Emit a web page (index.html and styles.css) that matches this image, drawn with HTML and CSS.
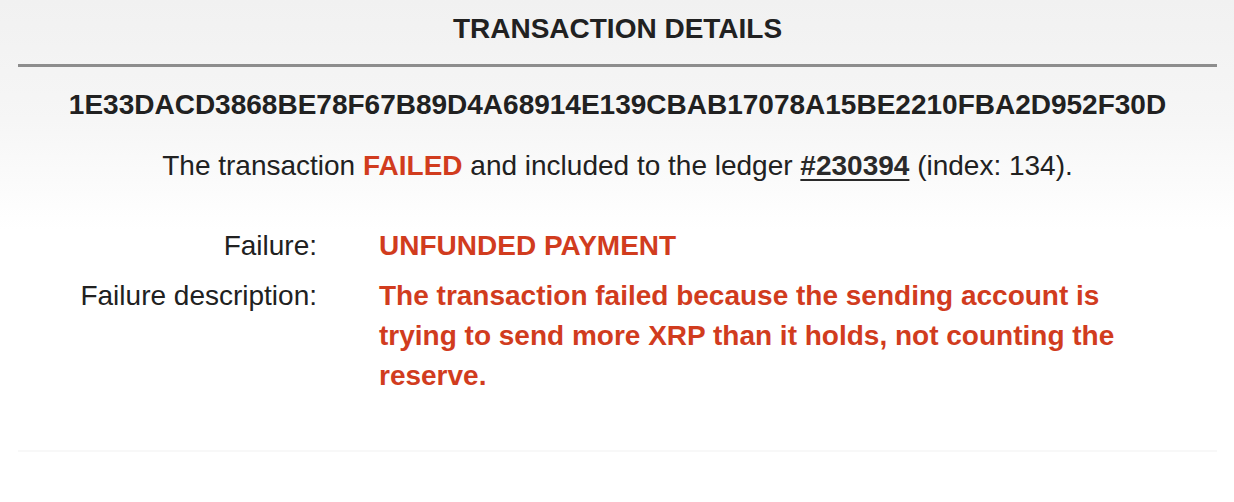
FILE: index.html
```html
<!DOCTYPE html>
<html lang="en">
<head>
<meta charset="utf-8">
<title>Transaction details</title>
<link rel="stylesheet" href="styles.css">
</head>
<body>
<main class="card">
  <h1 class="title">TRANSACTION DETAILS</h1>
  <div class="hash">1E33DACD3868BE78F67B89D4A68914E139CBAB17078A15BE2210FBA2D952F30D</div>
  <p class="summary">The transaction <b class="failed">FAILED</b> and included to the ledger <a class="ledger" href="#">#230394</a> (index: 134).</p>
  <div class="details">
    <div class="label">Failure:</div>
    <div class="value">UNFUNDED PAYMENT</div>
    <div class="label">Failure description:</div>
    <div class="value">The transaction failed because the sending account is trying to send more XRP than it holds, not counting the reserve.</div>
  </div>
</main>
</body>
</html>
```
FILE: styles.css
```css
html, body {
  margin: 0;
  padding: 0;
}
body {
  background: linear-gradient(to bottom, #f1f1f1 0px, #f6f6f6 120px, #ffffff 230px, #ffffff 100%);
  font-family: "Liberation Sans", Helvetica, Arial, sans-serif;
  font-size: 28px;
  line-height: 40px;
  color: #212121;
  min-height: 502px;
}
.card {
  margin: 0 17px 0 18px;
  padding: 9px 0 54px;
  border-bottom: 2px solid #f8f8f8;
}
.title {
  margin: 0;
  font-size: 28px;
  line-height: 40px;
  font-weight: bold;
  text-align: center;
  padding-bottom: 15px;
  border-bottom: 3px solid #8d8d8d;
}
.hash {
  margin-top: 18px;
  font-weight: bold;
  text-align: center;
}
.summary {
  margin: 21px 0 0;
  text-align: center;
}
.failed {
  color: #d13c1e;
}
.ledger {
  color: #2a2a2a;
  font-weight: bold;
  text-decoration: underline;
  text-decoration-thickness: 2px;
  text-underline-offset: 4px;
}
.details {
  margin-top: 40px;
  display: grid;
  grid-template-columns: 299px 770px;
  column-gap: 62px;
  row-gap: 10px;
}
.label {
  text-align: right;
}
.value {
  color: #d13c1e;
  font-weight: bold;
}
```
